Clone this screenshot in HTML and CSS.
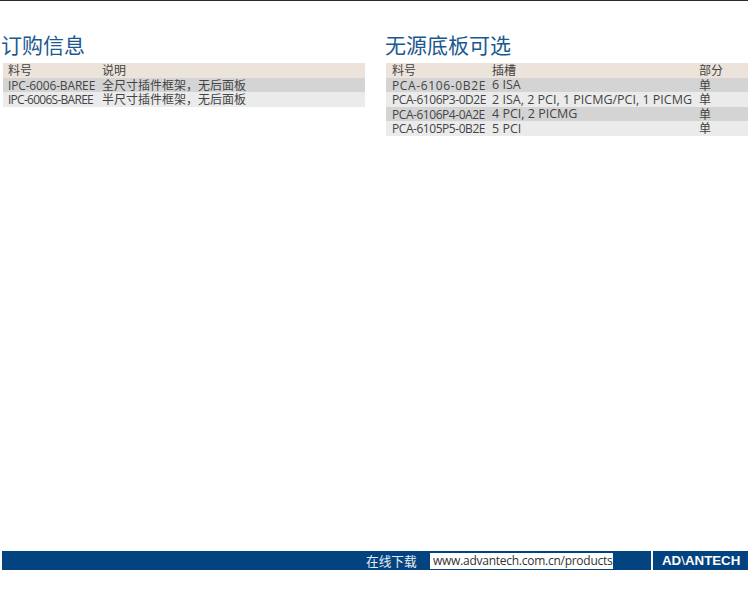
FILE: index.html
```html
<!DOCTYPE html>
<html lang="zh-CN">
<head>
<meta charset="utf-8">
<title>订购信息</title>
<link rel="stylesheet" href="styles.css">
</head>
<body>
<div class="page">
  <div class="rule"></div>
  <main class="columns">
    <section class="col col-left">
      <h2 class="title">订购信息</h2>
      <table class="tbl">
        <colgroup><col class="l1"><col></colgroup>
        <tr class="head"><td>料号</td><td>说明</td></tr>
        <tr class="dark"><td class="pn ipc">IPC-6006-BAREE</td><td>全尺寸插件框架，无后面板</td></tr>
        <tr class="light"><td class="pn ipc-s">IPC-6006S-BAREE</td><td>半尺寸插件框架，无后面板</td></tr>
      </table>
    </section>
    <section class="col">
      <h2 class="title">无源底板可选</h2>
      <table class="tbl tbl-right">
        <colgroup><col class="r1"><col class="r2"><col></colgroup>
        <tr class="head"><td>料号</td><td>插槽</td><td>部分</td></tr>
        <tr class="dark"><td class="pn pca-wide">PCA-6106-0B2E</td><td class="lat">6 ISA</td><td>单</td></tr>
        <tr class="light"><td class="pn pca">PCA-6106P3-0D2E</td><td class="lat">2 ISA, 2 PCI, 1 PICMG/PCI, 1 PICMG</td><td>单</td></tr>
        <tr class="dark"><td class="pn pca">PCA-6106P4-0A2E</td><td class="lat">4 PCI, 2 PICMG</td><td>单</td></tr>
        <tr class="light"><td class="pn pca">PCA-6105P5-0B2E</td><td class="lat">5 PCI</td><td>单</td></tr>
      </table>
    </section>
  </main>
  <footer class="footer">
    <span class="dl">在线下载</span>
    <span class="url">www.advantech.com.cn/products</span>
    <span class="logo">AD<span class="logo-v">\</span>ANTECH</span>
  </footer>
</div>
</body>
</html>
```
FILE: styles.css
```css
html, body { margin: 0; padding: 0; background: #fff; }
body { font-family: "Open Sans", "Noto Sans CJK SC", sans-serif; font-size: 12px; color: #444; }
.page { width: 750px; height: 591px; display: flex; flex-direction: column; overflow: hidden; }
.rule { height: 1px; margin-right: 2px; background: #2b2b2b; }
.columns { display: flex; gap: 21px; padding: 0 2px 0 3px; height: 550px; box-sizing: border-box; }
.col { width: 362px; flex: none; }
.title { margin: 28px 0 0 -1px; height: 34px; font: 400 21px/30px "Noto Sans CJK SC", sans-serif; color: #1b5890; }
.col-left .title { margin-left: -2px; }
.tbl { width: 362px; border-collapse: collapse; table-layout: fixed; }
.tbl td { padding: 1px 0 0 5px; height: 13.5px; line-height: 13.5px; white-space: nowrap; overflow: visible; }
.tbl-right td { padding-left: 6px; }
.l1 { width: 94px; }
.r1 { width: 100px; }
.r2 { width: 207px; }
.tbl td.lat { font-size: 12.5px; padding-top: 0; height: 14.5px; }
.ipc { letter-spacing: -0.16px; }
.ipc-s { letter-spacing: -0.73px; }
.pca { letter-spacing: -0.45px; }
.pca-wide { letter-spacing: 0.64px; }
.head td { background: #ece3da; }
.dark td { background: #d4d4d4; }
.light td { background: #ebebeb; }
.footer { margin-left: 2px; width: 746px; height: 19px; background: #03437f; display: flex; align-items: center; color: #fff; }
.dl { margin-left: 364px; width: 64px; font: 400 12.7px/19px "Noto Sans CJK SC", sans-serif; color: #e6edf3; }
.url { width: 180px; height: 16px; padding-left: 3px; background: #fff; color: #333; font-size: 12px; letter-spacing: -0.26px; line-height: 16px; white-space: nowrap; }
.logo { margin-left: 38px; width: 95px; height: 19px; border-left: 2px solid #fff; box-sizing: border-box; padding-left: 9px; font: 700 13.3px/19px "Liberation Sans", sans-serif; white-space: nowrap; }
.logo-v { font-weight: 400; }
```
